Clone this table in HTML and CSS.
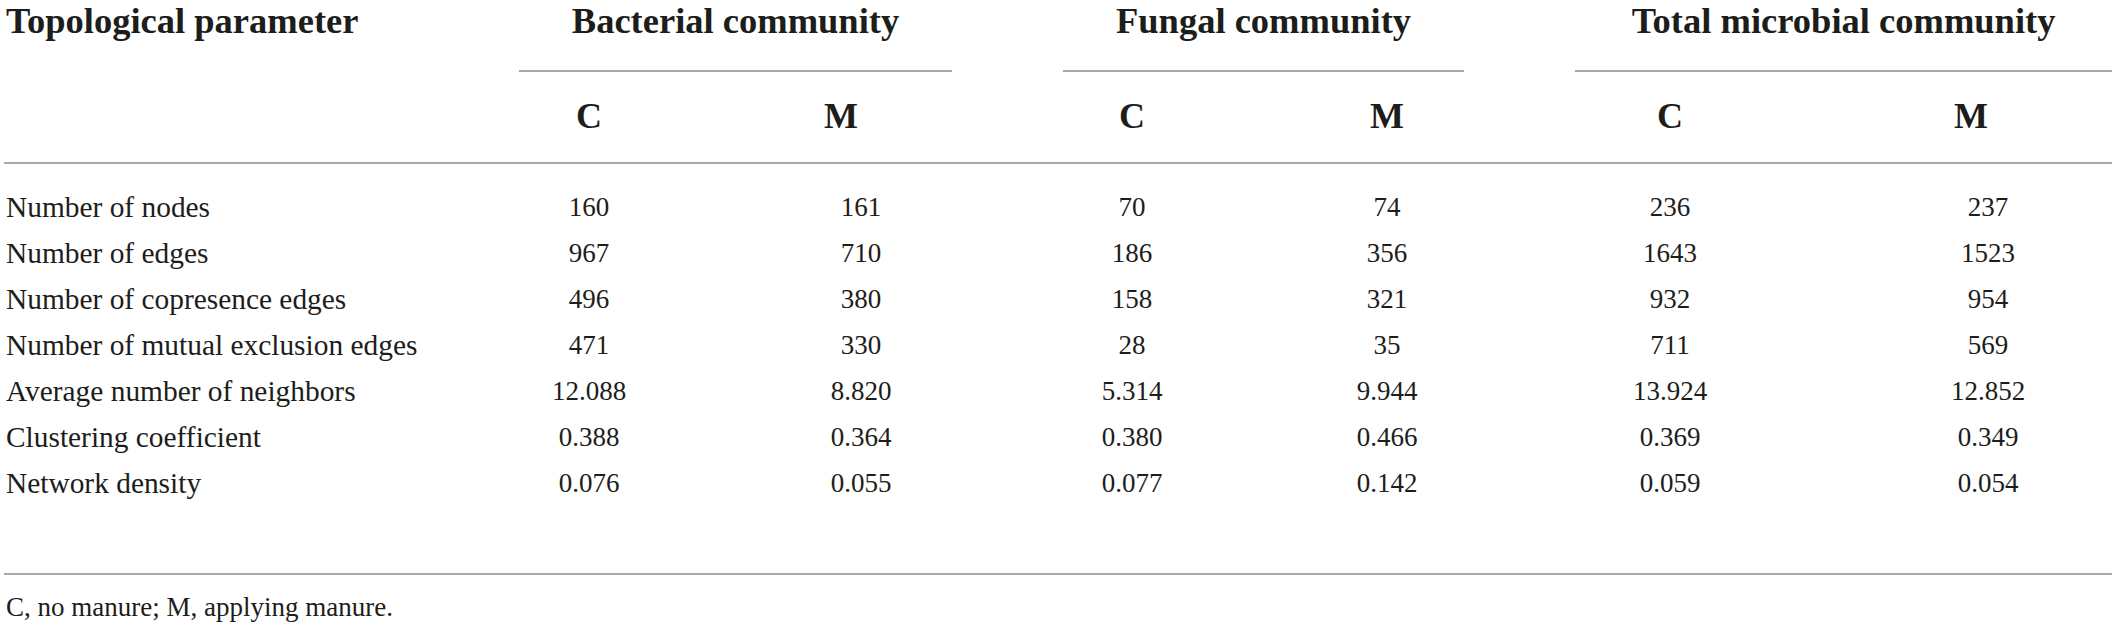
FILE: index.html
```html
<!DOCTYPE html>
<html lang="en">
<head>
  <meta charset="UTF-8"/>
  <meta name="viewport" content="width=device-width, initial-scale=1.0"/>
  <title>Topological parameters of co-occurrence networks</title>
  <link rel="stylesheet" href="styles.css">
</head>
<body>
  <table class="topo">
    <colgroup>
      <col class="c-label"><col class="c-bc"><col class="c-bm"><col class="c-fc"><col class="c-fm"><col class="c-tc"><col class="c-tm">
    </colgroup>
    <thead>
      <tr class="groups">
        <th rowspan="2" class="label">Topological parameter</th>
        <th colspan="2"><div class="group bact">Bacterial community</div></th>
        <th colspan="2"><div class="group fung">Fungal community</div></th>
        <th colspan="2"><div class="group total">Total microbial community</div></th>
      </tr>
      <tr class="treat">
        <th>C</th><th class="m-bact">M</th>
        <th>C</th><th>M</th>
        <th>C</th><th class="last m-total">M</th>
      </tr>
    </thead>
    <tbody>
      <tr><td>Number of nodes</td><td>160</td><td>161</td><td>70</td><td>74</td><td>236</td><td class="last">237</td></tr>
      <tr><td>Number of edges</td><td>967</td><td>710</td><td>186</td><td>356</td><td>1643</td><td class="last">1523</td></tr>
      <tr><td>Number of copresence edges</td><td>496</td><td>380</td><td>158</td><td>321</td><td>932</td><td class="last">954</td></tr>
      <tr><td>Number of mutual exclusion edges</td><td>471</td><td>330</td><td>28</td><td>35</td><td>711</td><td class="last">569</td></tr>
      <tr><td>Average number of neighbors</td><td>12.088</td><td>8.820</td><td>5.314</td><td>9.944</td><td>13.924</td><td class="last">12.852</td></tr>
      <tr><td>Clustering coefficient</td><td>0.388</td><td>0.364</td><td>0.380</td><td>0.466</td><td>0.369</td><td class="last">0.349</td></tr>
      <tr><td>Network density</td><td>0.076</td><td>0.055</td><td>0.077</td><td>0.142</td><td>0.059</td><td class="last">0.054</td></tr>
    </tbody>
  </table>
  <p class="note">C, no manure; M, applying manure.</p>
</body>
</html>
```

FILE: styles.css
```css
* { box-sizing: border-box; margin: 0; padding: 0; }
body {
  margin: 0;
  background: #fff;
  color: #1d1d1b;
  font-family: "Liberation Serif", "Times New Roman", serif;
}

:root { --rule: #a8a8a8; }

.topo {
  margin-left: 4px;
  width: 2108px;
  table-layout: fixed;
  border-collapse: separate;
  border-spacing: 0;
}
.c-label { width: 515px; }
.c-bc { width: 140px; }
.c-bm { width: 404px; }
.c-fc { width: 138px; }
.c-fm { width: 372px; }
.c-tc { width: 194px; }
.c-tm { width: 345px; }

th { font-weight: bold; padding: 0; }

/* header row 1 */
.groups th { font-size: 36.5px; line-height: 41px; text-align: center; vertical-align: top; }
.groups th.label {
  text-align: left; padding-left: 2px;
  border-bottom: 2px solid var(--rule);
}
.group { padding-bottom: 29px; border-bottom: 2px solid var(--rule); }
.group.bact { margin-right: 111px; }
.group.fung { margin-right: 109px; }
.group.total { margin-left: 2px; }

/* header row 2 */
.treat th {
  font-size: 36px; line-height: 41px; text-align: center;
  padding: 24px 0 25px; border-bottom: 2px solid var(--rule);
}
.treat th.m-bact { padding-right: 40px; }
.treat th.last { padding-left: 97px; }
.treat th.m-total { padding-right: 34px; }

/* body */
td {
  font-size: 27px; line-height: 46px; text-align: center;
  padding: 0; white-space: nowrap;
}
td:first-child { font-size: 29.4px; text-align: left; padding-left: 2px; }
td.last { padding-left: 97px; }
tbody tr:first-child td { padding-top: 20px; }
tbody tr:last-child td { padding-bottom: 67px; border-bottom: 2px solid var(--rule); }

.note {
  margin: 14px 0 0 6px;
  font-size: 27px; line-height: 36px;
}
```
